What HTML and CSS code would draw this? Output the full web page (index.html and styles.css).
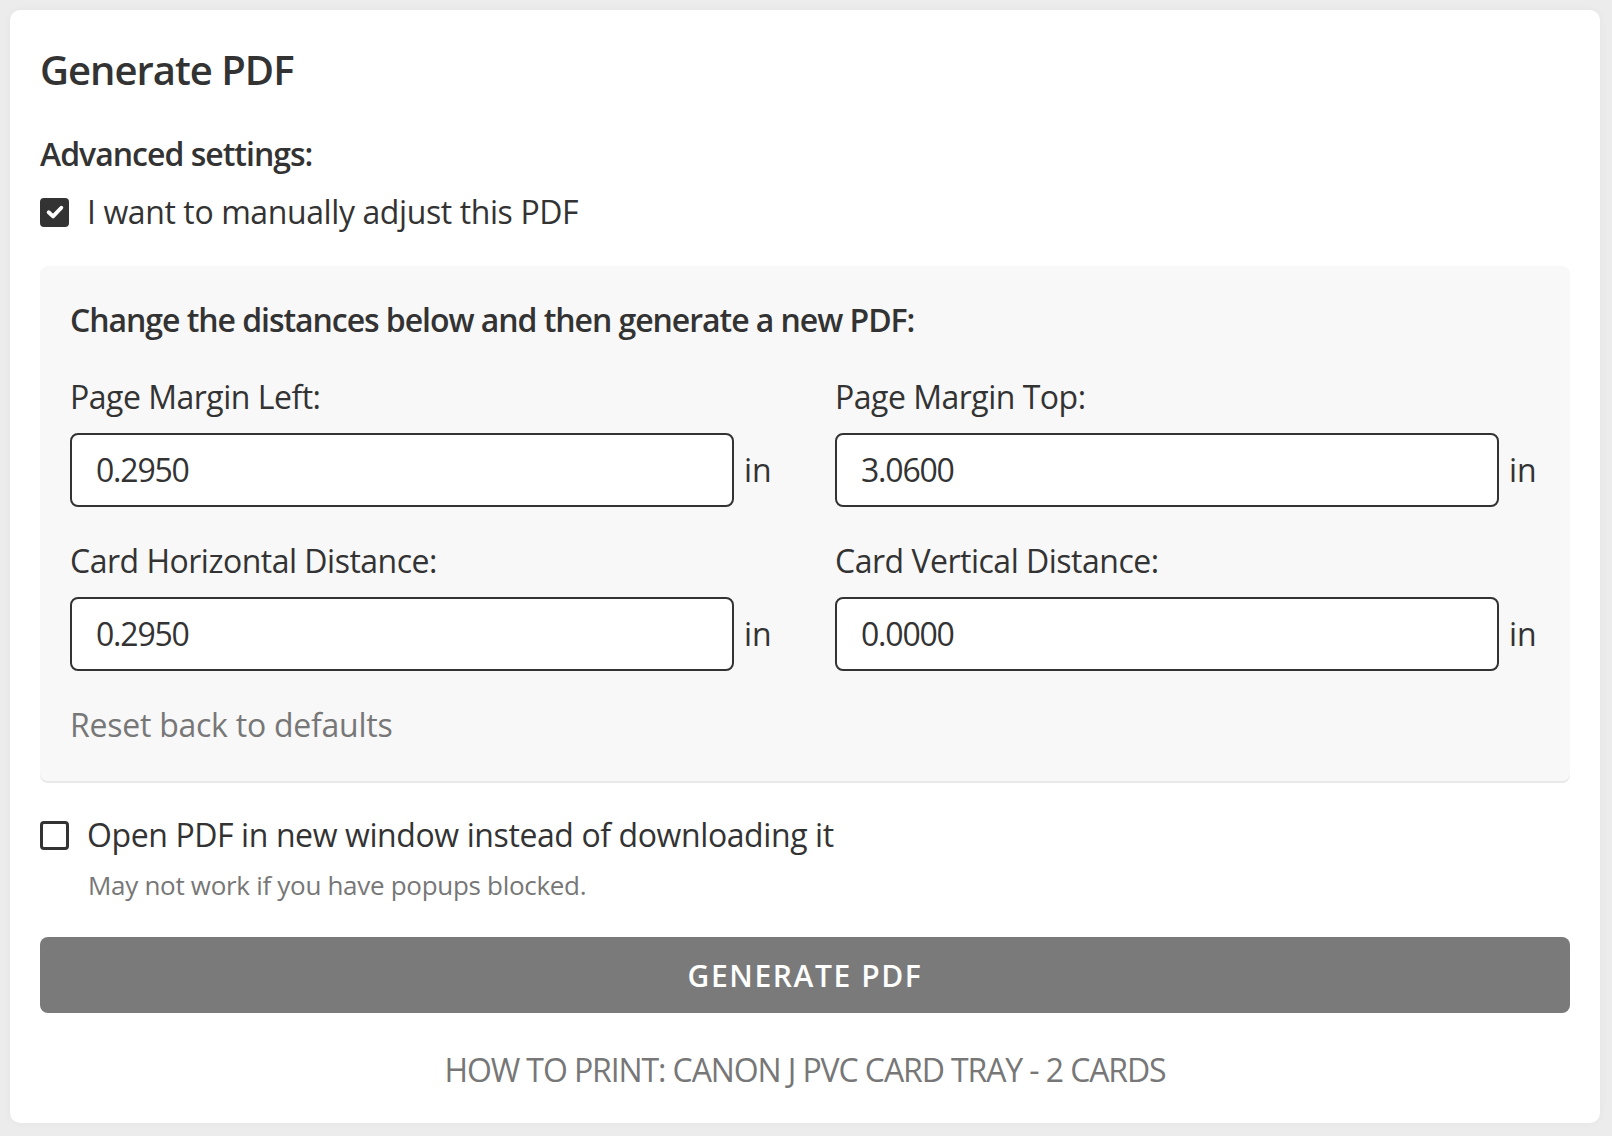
FILE: index.html
```html
<!DOCTYPE html>
<html lang="en">
<head>
<meta charset="utf-8">
<title>Generate PDF</title>
<link rel="stylesheet" href="styles.css">
</head>
<body>
<div class="card">
  <h2 class="title">Generate PDF</h2>
  <div class="section-label">Advanced settings:</div>
  <label class="check-row">
    <span class="box checked">
      <svg viewBox="0 0 16 16" width="22" height="22"><path d="M3.4 8.2 L6.6 11.2 L12.6 4.9" fill="none" stroke="#fff" stroke-width="2.8" stroke-linecap="round" stroke-linejoin="round"/></svg>
    </span>
    <span class="check-text">I want to manually adjust this PDF</span>
  </label>

  <div class="panel">
    <div class="panel-title">Change the distances below and then generate a new PDF:</div>
    <div class="grid">
      <div class="field">
        <div class="label">Page Margin Left:</div>
        <div class="input-row"><div class="input">0.2950</div><span class="unit">in</span></div>
      </div>
      <div class="field">
        <div class="label">Page Margin Top:</div>
        <div class="input-row"><div class="input">3.0600</div><span class="unit">in</span></div>
      </div>
      <div class="field">
        <div class="label">Card Horizontal Distance:</div>
        <div class="input-row"><div class="input">0.2950</div><span class="unit">in</span></div>
      </div>
      <div class="field">
        <div class="label">Card Vertical Distance:</div>
        <div class="input-row"><div class="input">0.0000</div><span class="unit">in</span></div>
      </div>
    </div>
    <div class="reset">Reset back to defaults</div>
  </div>

  <label class="check-row open-row">
    <span class="box"></span>
    <span class="check-text">Open PDF in new window instead of downloading it</span>
  </label>
  <div class="hint">May not work if you have popups blocked.</div>

  <div class="button">GENERATE PDF</div>
  <div class="howto">HOW TO PRINT: CANON J PVC CARD TRAY - 2 CARDS</div>
</div>
</body>
</html>
```

FILE: styles.css
```css
html, body {
  margin: 0;
  padding: 0;
}
body {
  background: #ececec;
  padding: 10px 12px 13px 10px;
  font-family: "Open Sans", "Noto Sans", sans-serif;
  color: #333;
}
.card {
  background: #fff;
  border-radius: 10px;
  box-shadow: 0 0 8px rgba(0,0,0,0.04);
  padding: 30px 30px 34px 30px;
  box-sizing: border-box;
  height: 1113px;
}
.title {
  font-size: 40px;
  line-height: 48px;
  font-weight: 650;
  letter-spacing: -1px;
  margin: 6px 0 0 0;
}
.section-label {
  font-size: 32px;
  line-height: 40px;
  font-weight: 630;
  letter-spacing: -1px;
  margin-top: 40px;
}
.check-row {
  display: flex;
  align-items: center;
  margin-top: 18px;
  height: 40px;
}
.box {
  width: 29px;
  height: 29px;
  box-sizing: border-box;
  border: 3px solid #333;
  border-radius: 4px;
  background: #fff;
  flex: none;
  display: flex;
  align-items: center;
  justify-content: center;
}
.box.checked {
  background: #333;
}
.check-text {
  font-size: 32px;
  line-height: 40px;
  letter-spacing: -0.4px;
  margin-left: 18px;
}
.panel {
  margin-top: 34px;
  background: #f8f8f8;
  border-radius: 8px;
  box-shadow: 0 2px 0 #e9e9e9;
  padding: 34px 30px 36px 30px;
}
.panel-title {
  font-size: 32px;
  line-height: 40px;
  font-weight: 630;
  letter-spacing: -1.05px;
}
.grid {
  display: grid;
  grid-template-columns: 1fr 1fr;
  column-gap: 60px;
  row-gap: 34px;
  margin-top: 37px;
}
.label {
  font-size: 32px;
  line-height: 40px;
  letter-spacing: -0.5px;
  margin-bottom: 16px;
}
.input-row {
  display: flex;
  align-items: center;
}
.input {
  flex: 1;
  height: 74px;
  box-sizing: border-box;
  border: 2px solid #333;
  border-radius: 8px;
  background: #fff;
  padding: 0 24px;
  font-size: 32px;
  line-height: 70px;
  letter-spacing: -1.2px;
}
.unit {
  width: 31px;
  margin-left: 10px;
  font-size: 32px;
  line-height: 40px;
}
.reset {
  font-size: 32px;
  line-height: 40px;
  color: #777;
  letter-spacing: -0.25px;
  margin-top: 34px;
}
.open-row {
  margin-top: 34px;
}
.hint {
  font-size: 26px;
  line-height: 36px;
  color: #777;
  letter-spacing: -0.3px;
  margin: 12px 0 0 48px;
}
.button {
  margin-top: 34px;
  height: 76px;
  background: #7a7a7a;
  border-radius: 8px;
  color: #fff;
  font-size: 30px;
  font-weight: 600;
  letter-spacing: 1.6px;
  display: flex;
  align-items: center;
  justify-content: center;
}
.howto {
  margin-top: 37px;
  text-align: center;
  font-size: 32px;
  line-height: 40px;
  color: #777;
  letter-spacing: -1.1px;
}
```
